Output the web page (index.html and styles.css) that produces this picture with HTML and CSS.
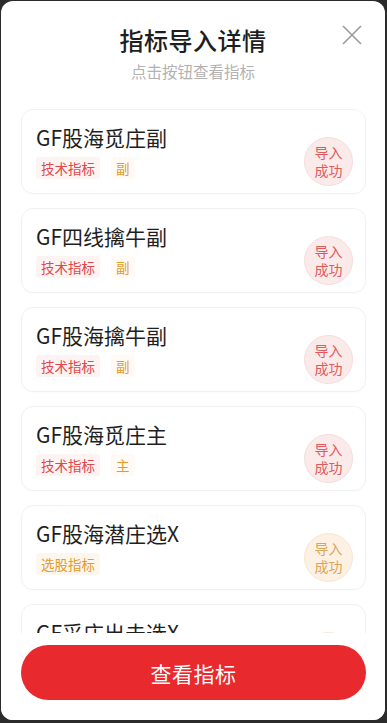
FILE: index.html
```html
<!DOCTYPE html>
<html lang="zh">
<head>
<meta charset="utf-8">
<link rel="stylesheet" href="styles.css">
</head>
<body>
<div class="modal">
  <div class="header">
    <div class="title">指标导入详情</div>
    <div class="subtitle">点击按钮查看指标</div>
    <svg class="close" width="20" height="20" viewBox="0 0 20 20"><path d="M1 1L19 19M19 1L1 19" stroke="#9a9a9a" stroke-width="1.6" fill="none"/></svg>
  </div>
  <div class="list">
    <div class="card">
      <div class="info">
        <div class="name">GF股海觅庄副</div>
        <div class="tags"><span class="tag red">技术指标</span><span class="tag orange">副</span></div>
      </div>
      <div class="badge red"><span>导入</span><span>成功</span></div>
    </div>
    <div class="card">
      <div class="info">
        <div class="name">GF四线擒牛副</div>
        <div class="tags"><span class="tag red">技术指标</span><span class="tag orange">副</span></div>
      </div>
      <div class="badge red"><span>导入</span><span>成功</span></div>
    </div>
    <div class="card">
      <div class="info">
        <div class="name">GF股海擒牛副</div>
        <div class="tags"><span class="tag red">技术指标</span><span class="tag orange">副</span></div>
      </div>
      <div class="badge red"><span>导入</span><span>成功</span></div>
    </div>
    <div class="card">
      <div class="info">
        <div class="name">GF股海觅庄主</div>
        <div class="tags"><span class="tag red">技术指标</span><span class="tag orange">主</span></div>
      </div>
      <div class="badge red"><span>导入</span><span>成功</span></div>
    </div>
    <div class="card">
      <div class="info">
        <div class="name">GF股海潜庄选X</div>
        <div class="tags"><span class="tag orange solid">选股指标</span></div>
      </div>
      <div class="badge orange"><span>导入</span><span>成功</span></div>
    </div>
    <div class="card">
      <div class="info">
        <div class="name">GF采庄出击选X</div>
        <div class="tags"><span class="tag orange solid">选股指标</span></div>
      </div>
      <div class="badge orange"><span>导入</span><span>成功</span></div>
    </div>
  </div>
  <div class="footer">
    <div class="btn">查看指标</div>
  </div>
</div>
</body>
</html>
```
FILE: styles.css
```css
html, body {
  margin: 0;
  padding: 0;
  background: #2b2b2b;
  font-family: "Noto Sans CJK SC", "Noto Sans", sans-serif;
}
body {
  width: 387px;
  height: 723px;
  padding: 1px 2px 3px 1px;
  box-sizing: border-box;
}
.modal {
  background: #fff;
  border-radius: 12px;
  height: 719px;
  display: flex;
  flex-direction: column;
  overflow: hidden;
}
.header {
  position: relative;
  text-align: center;
  padding-top: 23px;
  height: 85px;
  flex: none;
  box-sizing: border-box;
}
.title {
  font-size: 24px;
  line-height: 32px;
  font-weight: 500;
  color: #1e1e1e;
  letter-spacing: 0.5px;
}
.subtitle {
  font-size: 15.5px;
  line-height: 22px;
  margin-top: 4px;
  color: #b2b2b2;
}
.close {
  position: absolute;
  right: 23px;
  top: 24px;
}
.list {
  flex: 1;
  overflow: hidden;
  padding: 23px 19px 0 20px;
  display: flex;
  flex-direction: column;
  gap: 14px;
}
.card {
  flex: none;
  height: 85px;
  box-sizing: border-box;
  border: 1px solid #f1f1f1;
  border-radius: 12px;
  padding: 13px 12px 0 14px;
  display: flex;
  justify-content: space-between;
  box-shadow: 0 1px 3px rgba(0,0,0,0.02);
}
.name {
  font-size: 21px;
  line-height: 28px;
  color: #1f1f1f;
}
.tags {
  display: flex;
  gap: 11px;
  margin-top: 6px;
}
.tag {
  font-size: 13.5px;
  line-height: 22px;
  padding: 0 5px;
  border-radius: 3px;
}
.tag.red {
  color: #e0474a;
  background: #fdf3f3;
}
.tag.orange {
  color: #e49a2c;
  background: #fffaf4;
}
.tag.orange.solid {
  background: #fdf6ec;
}
.badge {
  align-self: center;
  margin-top: 6px;
  width: 49px;
  height: 49px;
  border-radius: 50%;
  font-size: 14px;
  line-height: 18px;
  display: flex;
  flex-direction: column;
  align-items: center;
  justify-content: center;
  box-sizing: border-box;
}
.badge.red {
  background: #fbeaea;
  border: 1px solid #f6dcdc;
  color: #e0595b;
}
.badge.orange {
  background: #fdf1e3;
  border: 1px solid #f8e6d2;
  color: #d9a55a;
}
.footer {
  flex: none;
  height: 87px;
  background: #fff;
  padding: 12px 19px 0 20px;
  box-sizing: border-box;
}
.btn {
  height: 55px;
  border-radius: 28px;
  background: #e8292d;
  color: #fff;
  font-size: 21px;
  display: flex;
  align-items: center;
  justify-content: center;
  letter-spacing: 0.5px;
}
```
